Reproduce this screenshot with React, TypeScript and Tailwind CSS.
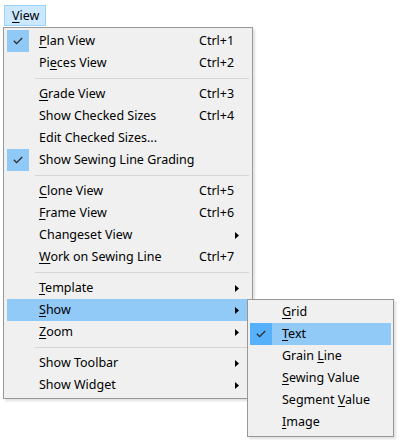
import React from "react";

type Item =
  | { sep: true }
  | {
      sep?: false;
      label: string;
      u?: number;
      shortcut?: string;
      arrow?: boolean;
      checked?: boolean;
      active?: boolean;
    };

const mainItems: Item[] = [
  { label: "Plan View", u: 0, shortcut: "Ctrl+1", checked: true },
  { label: "Pieces View", u: 2, shortcut: "Ctrl+2" },
  { sep: true },
  { label: "Grade View", u: 0, shortcut: "Ctrl+3" },
  { label: "Show Checked Sizes", shortcut: "Ctrl+4" },
  { label: "Edit Checked Sizes..." },
  { label: "Show Sewing Line Grading", checked: true },
  { sep: true },
  { label: "Clone View", u: 0, shortcut: "Ctrl+5" },
  { label: "Frame View", u: 0, shortcut: "Ctrl+6" },
  { label: "Changeset View", arrow: true },
  { label: "Work on Sewing Line", u: 0, shortcut: "Ctrl+7" },
  { sep: true },
  { label: "Template", u: 0, arrow: true },
  { label: "Show", u: 0, arrow: true, active: true },
  { label: "Zoom", u: 0, arrow: true },
  { sep: true },
  { label: "Show Toolbar", arrow: true },
  { label: "Show Widget", arrow: true },
];

const subItems: Item[] = [
  { label: "Grid", u: 0 },
  { label: "Text", u: 0, checked: true, active: true },
  { label: "Grain Line", u: 6 },
  { label: "Sewing Value", u: 0 },
  { label: "Segment Value", u: 8 },
  { label: "Image", u: 0 },
];

function Label({ text, u }: { text: string; u?: number }) {
  if (u === undefined) return <>{text}</>;
  return (
    <>
      {text.slice(0, u)}
      <span className="underline underline-offset-[2px] decoration-[1px]">{text[u]}</span>
      {text.slice(u + 1)}
    </>
  );
}

function Check() {
  return (
    <svg width="10" height="8" viewBox="0 0 10 8" className="block">
      <polyline points="0.8,3.8 3.6,6.6 9.2,1" fill="none" stroke="#2b2b2b" strokeWidth="1.3" />
    </svg>
  );
}

function Arrow() {
  return (
    <svg width="4" height="7" viewBox="0 0 4 7" className="block">
      <polygon points="0,0 4,3.5 0,7" fill="#000" />
    </svg>
  );
}

function Row({ item, sub }: { item: Exclude<Item, { sep: true }>; sub?: boolean }) {
  return (
    <div
      className={`flex h-[22px] items-center ${item.active ? "bg-[#91c9f7]" : ""}`}
    >
      <div
        className={`flex h-[22px] w-[22px] shrink-0 items-center justify-center ${
          item.checked ? (item.active ? "bg-[#56b0fa]" : "bg-[#90c8f6]") : ""
        }`}
      >
        {item.checked && <Check />}
      </div>
      <div className={`ml-[10px] shrink-0 whitespace-nowrap pt-[1px] ${sub ? "w-[100px]" : "w-[160px]"}`}>
        <Label text={item.label} u={item.u} />
      </div>
      {!sub && (
        <>
          <div className="w-[36px] shrink-0 whitespace-nowrap pt-[1px]">{item.shortcut ?? ""}</div>
          <div className="flex w-[4px] shrink-0 items-center">{item.arrow && <Arrow />}</div>
        </>
      )}
    </div>
  );
}

function Sep() {
  return (
    <div className="flex h-[9px] items-center pl-[28px]">
      <div className="h-px w-full bg-[#d5d5d5]" />
    </div>
  );
}

export default function App() {
  return (
    <div
      className="relative h-[446px] w-[400px] overflow-hidden bg-white text-[12.5px] leading-none text-black"
      style={{ fontFamily: '"Noto Sans", "Open Sans", sans-serif' }}
    >
      {/* menu bar */}
      <div className="flex pl-[4px] pt-[5px]">
        <div className="flex h-[21px] w-[42px] items-center border border-[#99d1ff] bg-[#cce8ff] pl-[7px] pt-[1px]">
          <Label text="View" u={0} />
        </div>
      </div>

      {/* main menu */}
      <div className="absolute left-[3px] top-[27px] w-[250px] border border-[#979797] bg-[#f0f0f0] px-[3px] py-[2px] shadow-[2px_2px_2px_rgba(0,0,0,0.12)]">
        {mainItems.map((it, i) =>
          it.sep ? <Sep key={i} /> : <Row key={i} item={it} />
        )}
      </div>

      {/* submenu */}
      <div className="absolute left-[247px] top-[299px] w-[147px] border border-[#979797] bg-[#f0f0f0] px-[2px] pt-[1px] pb-[3px] shadow-[2px_2px_2px_rgba(0,0,0,0.12)]">
        {subItems.map((it, i) =>
          it.sep ? <Sep key={i} /> : <Row key={i} item={it} sub />
        )}
      </div>
    </div>
  );
}
